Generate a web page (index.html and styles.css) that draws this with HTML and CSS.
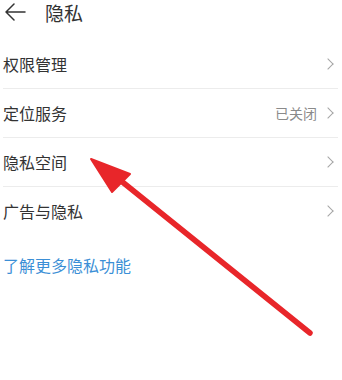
FILE: index.html
```html
<!DOCTYPE html>
<html lang="zh-CN">
<head>
    <meta charset="UTF-8">
    <meta name="viewport" content="width=device-width, initial-scale=1.0">
    <title>隐私</title>
    <link rel="stylesheet" href="styles.css">
</head>
<body>
    <header class="top-bar">
        <svg class="back-icon" width="22" height="18" viewBox="0 0 22 18">
            <path d="M21 9 H2 M10 1 L2 9 L10 17" fill="none" stroke="#333" stroke-width="1.5" stroke-linecap="round" stroke-linejoin="round"/>
        </svg>
        <h1>隐私</h1>
    </header>

    <ul class="menu">
        <li class="menu-item">
            <span class="label">权限管理</span>
            <span class="chevron"></span>
        </li>
        <li class="menu-item">
            <span class="label">定位服务</span>
            <span class="value">已关闭</span>
            <span class="chevron"></span>
        </li>
        <li class="menu-item">
            <span class="label">隐私空间</span>
            <span class="chevron"></span>
        </li>
        <li class="menu-item no-border">
            <span class="label">广告与隐私</span>
            <span class="chevron"></span>
        </li>
    </ul>

    <a href="#" class="more-link">了解更多隐私功能</a>

    <!-- annotation arrow drawn over the page -->
    <svg class="annotation" width="342" height="380" viewBox="0 0 342 380">
        <line x1="310" y1="333" x2="115" y2="176" stroke="#e8262a" stroke-width="5.5" stroke-linecap="round"/>
        <polygon points="91,159 130,174 112,192" fill="#e8262a" stroke="#e8262a" stroke-width="2" stroke-linejoin="round"/>
    </svg>
</body>
</html>
```

FILE: styles.css
```css
body {
    font-family: "Noto Sans CJK SC", "Noto Sans", sans-serif;
    color: #333;
    margin: 0;
    padding: 0;
    background-color: #fff;
    position: relative;
    width: 342px;
    height: 380px;
    overflow: hidden;
}
.top-bar {
    display: flex;
    align-items: center;
    height: 26px;
    padding-left: 4px;
    margin-bottom: 14px;
}
.back-icon {
    margin-top: -2px;
}
.top-bar h1 {
    margin: 0 0 0 19px;
    font-size: 19px;
    font-weight: 400;
    line-height: 26px;
}
.menu {
    list-style: none;
    margin: 0;
    padding: 0 4px 0 3px;
}
.menu-item {
    display: flex;
    align-items: center;
    height: 48px;
    border-bottom: 1px solid #ececec;
}
.menu-item.no-border {
    border-bottom: none;
}
.label {
    flex: 1;
    font-size: 16px;
}
.value {
    font-size: 14px;
    color: #8a8a8a;
    margin-right: 7px;
}
.chevron {
    width: 7px;
    height: 7px;
    border-top: 1.3px solid #a5a5a5;
    border-right: 1.3px solid #a5a5a5;
    transform: rotate(45deg);
    margin-right: 6px;
}
.more-link {
    display: block;
    margin: 18px 0 0 3px;
    font-size: 16px;
    color: #3b8fd6;
    text-decoration: none;
}
.annotation {
    position: absolute;
    left: 0;
    top: 0;
    pointer-events: none;
}
```
